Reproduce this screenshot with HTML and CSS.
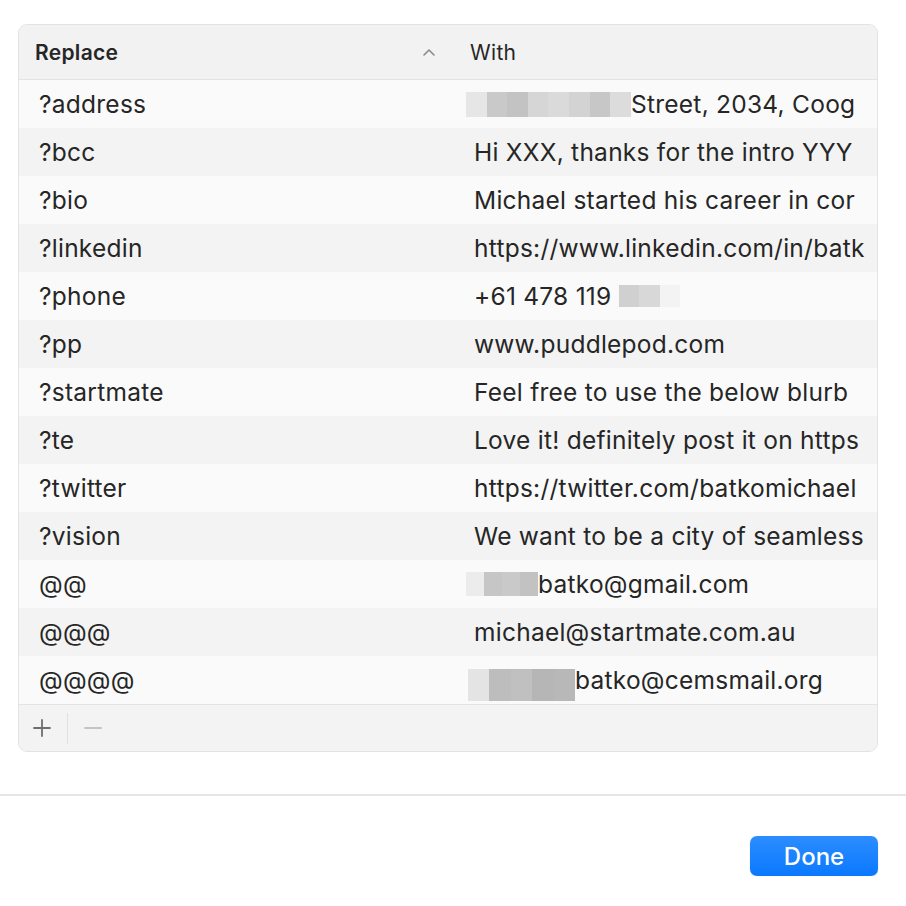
FILE: index.html
```html
<!DOCTYPE html>
<html>
<head>
<meta charset="utf-8">
<link rel="stylesheet" href="styles.css">
</head>
<body>
<div class="sheet">
  <div class="table">
    <div class="head">
      <div class="hcell hcell-main">
        <span class="hlabel bold">Replace</span>
        <svg class="chev" width="14" height="10" viewBox="0 0 14 10"><path d="M2 8 L7 3 L12 8" fill="none" stroke="#8a8a8a" stroke-width="1.6" stroke-linecap="round" stroke-linejoin="round"/></svg>
      </div>
      <div class="hcell hcell-with"><span class="hlabel">With</span></div>
    </div>
    <div class="rows">
      <div class="row"><div class="c1">?address</div><div class="c2"><span class="blur b-addr"><i style="background:#e6e6e6"></i><i style="background:#c9c9c9"></i><i style="background:#c3c3c3"></i><i style="background:#d6d6d6"></i><i style="background:#dadada"></i><i style="background:#d3d3d3"></i><i style="background:#c7c7c7"></i><i style="background:#dcdcdc"></i></span>Street, 2034, Coog</div></div>
      <div class="row"><div class="c1">?bcc</div><div class="c2">Hi XXX, thanks for the intro YYY</div></div>
      <div class="row"><div class="c1">?bio</div><div class="c2">Michael started his career in cor</div></div>
      <div class="row"><div class="c1">?linkedin</div><div class="c2">https://www.linkedin.com/in/batk</div></div>
      <div class="row"><div class="c1">?phone</div><div class="c2">+61 478 119<span class="blur b-phone"><i style="background:#d0d0d0"></i><i style="background:#d8d8d8"></i><i style="background:#f3f3f3"></i></span></div></div>
      <div class="row"><div class="c1">?pp</div><div class="c2">www.puddlepod.com</div></div>
      <div class="row"><div class="c1">?startmate</div><div class="c2">Feel free to use the below blurb</div></div>
      <div class="row"><div class="c1">?te</div><div class="c2">Love it! definitely post it on https</div></div>
      <div class="row"><div class="c1">?twitter</div><div class="c2">https://twitter.com/batkomichael</div></div>
      <div class="row"><div class="c1">?vision</div><div class="c2">We want to be a city of seamless</div></div>
      <div class="row"><div class="c1">@@</div><div class="c2"><span class="blur b-gmail"><i style="background:#ececec"></i><i style="background:#c6c6c6"></i><i style="background:#c9c9c9"></i><i style="background:#c2c2c2"></i></span>batko@gmail.com</div></div>
      <div class="row"><div class="c1">@@@</div><div class="c2">michael@startmate.com.au</div></div>
      <div class="row"><div class="c1">@@@@</div><div class="c2"><span class="blur b-cems"><i style="background:#e4e4e4"></i><i style="background:#bdbdbd"></i><i style="background:#c0c0c0"></i><i style="background:#b6b6b6"></i><i style="background:#b8b8b8"></i></span>batko@cemsmail.org</div></div>
    </div>
    <div class="foot">
      <svg class="fbtn" width="20" height="20" viewBox="0 0 20 20"><path d="M10 2 V18 M2 10 H18" stroke="#6e6e6e" stroke-width="1.8" stroke-linecap="round"/></svg>
      <span class="fsep"></span>
      <svg class="fbtn" width="20" height="20" viewBox="0 0 20 20"><path d="M2 10 H18" stroke="#c4c4c4" stroke-width="1.8" stroke-linecap="round"/></svg>
    </div>
  </div>
</div>
<div class="divider"></div>
<div class="actions">
  <button class="done">Done</button>
</div>
</body>
</html>
```
FILE: styles.css
```css
html, body {
  margin: 0;
  padding: 0;
  background: #ffffff;
}
body {
  font-family: Inter, "Noto Sans", "Liberation Sans", sans-serif;
  color: #262626;
}
.sheet {
  padding: 24px 28px 0 18px;
}
.table {
  border: 1px solid #e3e3e3;
  border-radius: 9px;
  overflow: hidden;
  background: #f3f3f3;
}
.head {
  display: flex;
  height: 54px;
  background: #f2f2f2;
  border-bottom: 1px solid #e3e3e3;
}
.hcell {
  display: flex;
  align-items: center;
  font-size: 21px;
  letter-spacing: 0.3px;
}
.hcell-main {
  width: 439px;
  padding-left: 16px;
  padding-right: 16px;
  box-sizing: border-box;
  justify-content: space-between;
}
.hcell-with {
  padding-left: 12px;
}
.bold {
  font-weight: 600;
}
.chev {
  margin-right: 6px;
}
.row {
  display: flex;
  height: 48px;
  align-items: center;
  font-size: 24.5px;
  letter-spacing: 0.25px;
  background: #fafafa;
  white-space: nowrap;
  overflow: hidden;
}
.row:nth-child(even) {
  background: #f3f3f3;
}
.c1 {
  width: 439px;
  flex: none;
  padding-left: 20px;
  box-sizing: border-box;
}
.c2 {
  padding-left: 16px;
  display: flex;
  align-items: center;
  overflow: hidden;
}
.blur {
  display: inline-flex;
  flex: none;
}
.blur i {
  display: block;
  height: 100%;
}
.b-addr {
  width: 165px;
  height: 25px;
  margin-left: -8px;
}
.b-addr i { width: 20.6px; }
.b-phone {
  width: 62px;
  height: 22px;
  margin-left: 7px;
}
.b-phone i { width: 20.6px; }
.b-gmail {
  width: 72px;
  height: 24px;
  margin-left: -8px;
}
.b-gmail i { width: 18px; }
.b-cems {
  width: 107px;
  height: 32px;
  margin-left: -6px;
  margin-top: 10px;
}
.b-cems i { width: 21.4px; }
.foot {
  display: flex;
  align-items: center;
  height: 46px;
  border-top: 1px solid #e3e3e3;
  background: #f3f3f3;
  padding-left: 13px;
}
.fsep {
  width: 1px;
  height: 31px;
  background: #e0e0e0;
  margin: 0 15px 0 15px;
}
.divider {
  height: 2px;
  background: #e6e6e6;
  margin-top: 42px;
}
.actions {
  display: flex;
  justify-content: flex-end;
  padding: 40px 28px 0 0;
}
.done {
  width: 128px;
  height: 40px;
  border: none;
  border-radius: 7px;
  background: linear-gradient(#2c8dff, #0a79ff);
  color: #ffffff;
  font-family: Inter, "Noto Sans", "Liberation Sans", sans-serif;
  font-size: 24px;
  font-weight: 500;
  box-shadow: 0 1px 2px rgba(0,0,0,0.12);
}
```
